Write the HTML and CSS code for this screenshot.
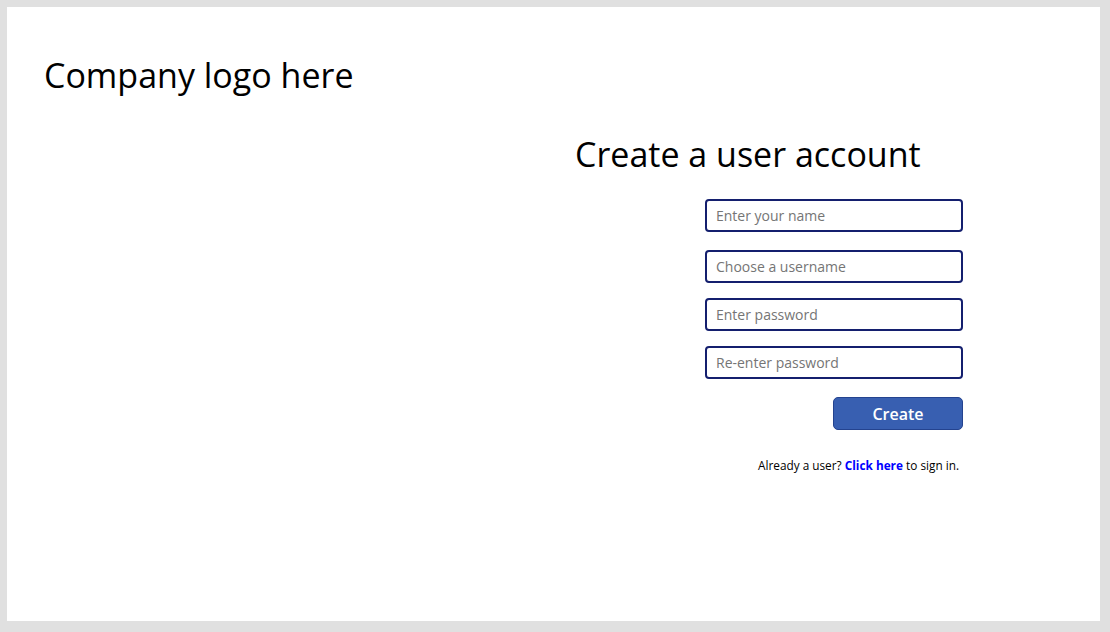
FILE: index.html
```html
<!DOCTYPE html>
<html>
<head>
<meta charset="utf-8">
<link rel="stylesheet" href="styles.css">
</head>
<body>
<div class="frame">
  <div class="logo">Company logo here</div>
  <div class="panel">
    <h1 class="title">Create a user account</h1>
    <form class="form">
      <input class="field" type="text" placeholder="Enter your name">
      <input class="field f2" type="text" placeholder="Choose a username">
      <input class="field" type="password" placeholder="Enter password">
      <input class="field" type="password" placeholder="Re-enter password">
      <button class="btn" type="button">Create</button>
      <p class="signin">Already a user? <a class="link" href="#">Click here</a> to sign in.</p>
    </form>
  </div>
</div>
</body>
</html>
```

FILE: styles.css
```css
html, body {
  margin: 0;
  padding: 0;
}
body {
  background: #e0e0e0;
  font-family: "Open Sans", "Liberation Sans", sans-serif;
  width: 1110px;
  height: 632px;
  padding: 7px 10px 11px 7px;
  box-sizing: border-box;
}
.frame {
  background: #fff;
  height: 614px;
  box-sizing: border-box;
  padding: 0;
}
.logo {
  font-size: 34px;
  line-height: 46px;
  padding: 45px 0 0 37px;
  color: #000;
}
.panel {
  margin-left: 568px;
  width: 388px;
}
.title {
  margin: 33px 0 0 0;
  font-weight: 400;
  font-size: 34px;
  line-height: 46px;
  color: #000;
}
.form {
  display: flex;
  flex-direction: column;
  align-items: flex-end;
  margin: 0;
  padding-top: 22px;
}
.field {
  width: 258px;
  height: 33px;
  box-sizing: border-box;
  border: 2px solid #141f6e;
  border-radius: 4px;
  padding: 0 9px;
  font-family: "Open Sans", sans-serif;
  font-size: 14px;
  color: #333;
  margin: 0 0 15px 0;
  outline: none;
}
.field.f2 { margin-top: 3px; }
.field::placeholder { color: #757575; }
.btn {
  width: 130px;
  height: 33px;
  margin-top: 3px;
  background: #385fb1;
  border: 1px solid #24438f;
  border-radius: 5px;
  color: #fff;
  font-family: "Open Sans", sans-serif;
  font-weight: 600;
  font-size: 16px;
}
.signin {
  margin: 27px 4px 0 0;
  font-size: 11.8px;
  color: #000;
}
.link {
  color: #0000ff;
  font-weight: 700;
  text-decoration: none;
}
```
